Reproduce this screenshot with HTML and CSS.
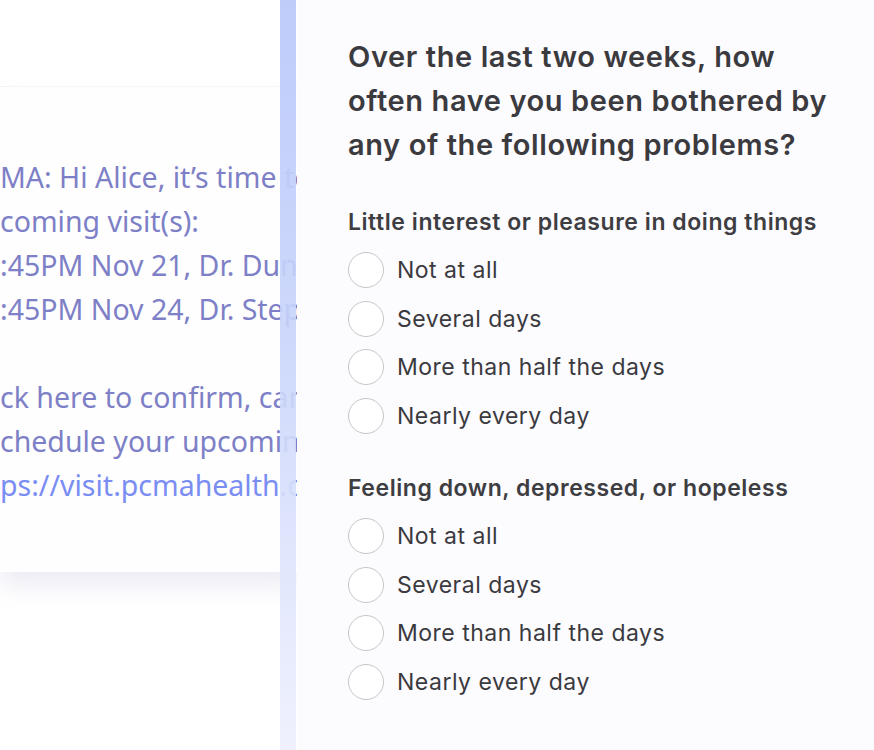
FILE: index.html
```html
<!DOCTYPE html>
<html lang="en">
<head>
<meta charset="utf-8">
<title>Questionnaire</title>
<link rel="stylesheet" href="styles.css">
</head>
<body>
<div class="page">
  <section class="sms-side">
    <div class="sms-card">
      <p class="line">MA: Hi Alice, it’s time to confirm your</p>
      <p class="line">coming visit(s):</p>
      <p class="line">:45PM Nov 21, Dr. Dunham</p>
      <p class="line">:45PM Nov 24, Dr. Stephens</p>
      <p class="line blank">&nbsp;</p>
      <p class="line">ck here to confirm, cancel or</p>
      <p class="line">chedule your upcoming visit:</p>
      <p class="line link">ps://visit.pcmahealth.com</p>
    </div>
    <div class="strip"></div>
  </section>
  <main class="form-side">
    <h1 class="title">Over the last two weeks, how often have you been bothered by any of the following problems?</h1>

    <fieldset class="question">
      <legend class="q-label">Little interest or pleasure in doing things</legend>
      <label class="option"><input type="radio" name="q1"><span class="radio"></span><span class="opt-text">Not at all</span></label>
      <label class="option"><input type="radio" name="q1"><span class="radio"></span><span class="opt-text">Several days</span></label>
      <label class="option"><input type="radio" name="q1"><span class="radio"></span><span class="opt-text">More than half the days</span></label>
      <label class="option"><input type="radio" name="q1"><span class="radio"></span><span class="opt-text">Nearly every day</span></label>
    </fieldset>

    <fieldset class="question">
      <legend class="q-label">Feeling down, depressed, or hopeless</legend>
      <label class="option"><input type="radio" name="q2"><span class="radio"></span><span class="opt-text">Not at all</span></label>
      <label class="option"><input type="radio" name="q2"><span class="radio"></span><span class="opt-text">Several days</span></label>
      <label class="option"><input type="radio" name="q2"><span class="radio"></span><span class="opt-text">More than half the days</span></label>
      <label class="option"><input type="radio" name="q2"><span class="radio"></span><span class="opt-text">Nearly every day</span></label>
    </fieldset>
  </main>
</div>
</body>
</html>
```

FILE: styles.css
```css
* { box-sizing: border-box; }

html, body {
  margin: 0;
  padding: 0;
  width: 874px;
  height: 750px;
  overflow: hidden;
  background: #ffffff;
}

.page {
  display: flex;
  width: 874px;
  height: 750px;
}

/* ---------- left: SMS preview ---------- */
.sms-side {
  position: relative;
  width: 297px;
  flex: 0 0 297px;
  height: 750px;
  overflow: hidden;
  background: #ffffff;
  padding-top: 86px;
}

.sms-card {
  width: 297px;
  height: 486px;
  background: #fefeff;
  border-top: 1px solid #f4f4f8;
  box-shadow: 0 14px 22px rgba(200, 200, 225, 0.35);
  padding-top: 68px;
  font-family: "Noto Sans", "Open Sans", sans-serif;
  font-size: 28.5px;
  color: #7d80c6;
}

.line {
  margin: 0;
  height: 44px;
  line-height: 44px;
  white-space: nowrap;
  letter-spacing: 0;
}

.line.link {
  color: #7a8df2;
}

.strip {
  position: absolute;
  top: 0;
  left: 280px;
  width: 16px;
  height: 750px;
  background: linear-gradient(180deg, rgba(188, 202, 250, 0.96) 0%, rgba(200, 212, 250, 0.9) 45%, rgba(226, 231, 252, 0.92) 80%, rgba(238, 240, 253, 0.95) 100%);
}

/* ---------- right: form ---------- */
.form-side {
  flex: 1;
  height: 750px;
  background: #fcfbfd;
  padding: 35px 10px 0 51px;
  font-family: Inter, "Noto Sans", sans-serif;
  color: #3a3a40;
}

.title {
  margin: 0 0 41px;
  font-size: 29px;
  font-weight: 600;
  line-height: 44px;
  letter-spacing: 0.6px;
  color: #3a3a3f;
  max-width: 510px;
}

.question {
  border: 0;
  margin: 0 0 34px;
  padding: 0;
  min-width: 0;
}

.q-label {
  padding: 0;
  font-size: 23px;
  font-weight: 600;
  line-height: 28px;
  margin-bottom: 10px;
  letter-spacing: 0.55px;
  color: #3d3d42;
}

.option {
  display: flex;
  align-items: center;
  height: 48.5px;
  gap: 13px;
  cursor: pointer;
}

.option input {
  display: none;
}

.radio {
  width: 36px;
  height: 36px;
  flex: 0 0 36px;
  border-radius: 50%;
  border: 1.5px solid #c6c6ca;
  background: #ffffff;
}

.opt-text {
  font-size: 23px;
  font-weight: 400;
  color: #3a3a3f;
  letter-spacing: 0.5px;
}
```
